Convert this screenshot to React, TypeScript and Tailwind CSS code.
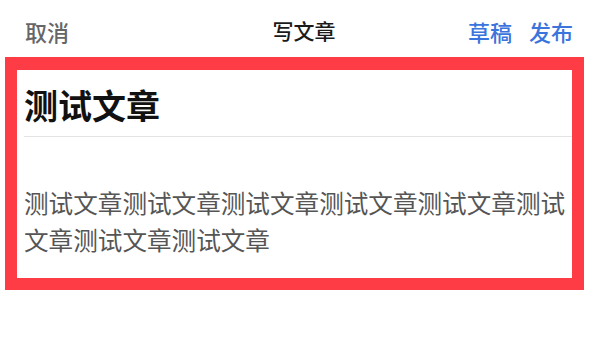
const FONT = "font-['Noto_Sans_CJK_SC','Noto_Sans',sans-serif]";

const BODY_TEXT = "测试文章测试文章测试文章测试文章测试文章测试文章测试文章测试文章";

export default function App() {
  return (
    <div className={`w-[600px] h-[338px] bg-white ${FONT}`}>
      {/* top bar */}
      <div className="h-[57px] pt-[4px] grid grid-cols-[1fr_auto_1fr] items-center pl-[25px] pr-[27px]">
        <button className="justify-self-start text-[22px] leading-none text-[#666666] font-medium">
          取消
        </button>
        <div className="ml-[10px] text-[21px] leading-none text-[#1a1a1a] font-medium">
          写文章
        </div>
        <div className="justify-self-end flex items-center gap-[17px] text-[22px] leading-none text-[#3a74dc] font-medium">
          <button>草稿</button>
          <button>发布</button>
        </div>
      </div>

      {/* editor, highlighted */}
      <div className="ml-[5px] w-[579px] h-[233px] border-[12px] border-t-[13px] border-[#fd3c46]">
        <div className="pl-[7px] pt-[12px]">
          <h1 className="text-[34px] leading-[45px] font-bold text-[#111111]">测试文章</h1>
          <div className="mt-[9px] h-px bg-[#e4e4e4]" />
          <p className="mt-[47px] w-[548px] text-[24.6px] leading-[37px] text-[#555555] break-all">
            {BODY_TEXT}
          </p>
        </div>
      </div>
    </div>
  );
}
